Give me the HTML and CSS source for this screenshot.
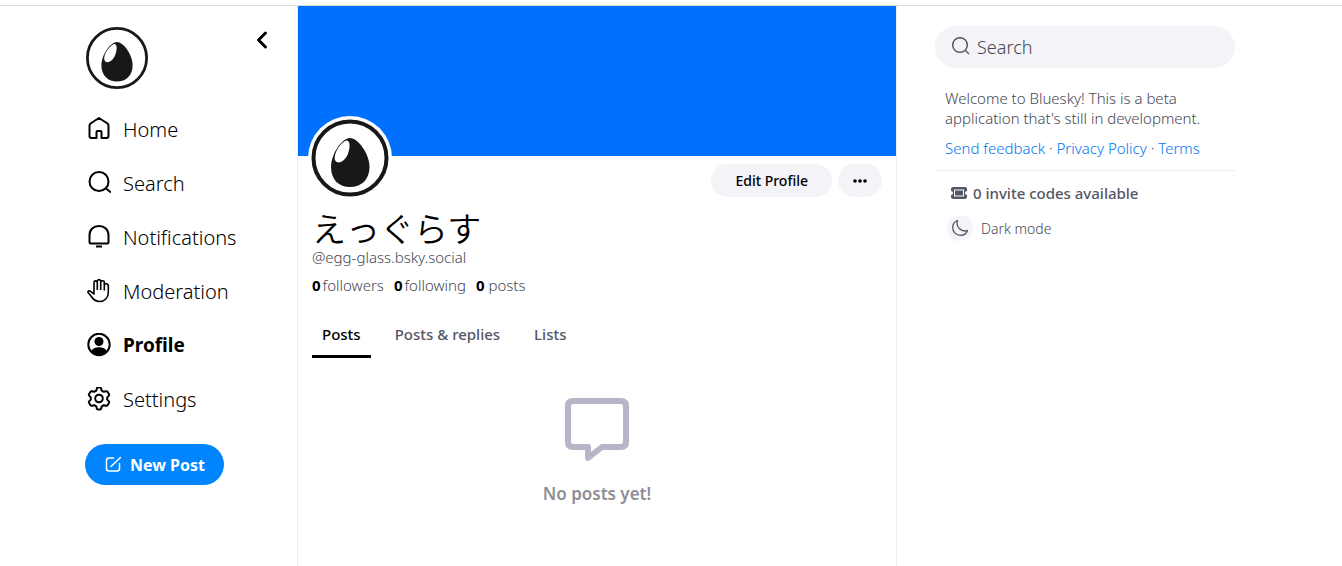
FILE: index.html
```html
<!DOCTYPE html>
<html lang="en">
<head>
    <meta charset="UTF-8">
    <meta name="viewport" content="width=device-width, initial-scale=1.0">
    <title>えっぐらす (@egg-glass.bsky.social)</title>
    <link rel="stylesheet" href="styles.css">
</head>
<body>
    <div class="shell">
        <nav class="left-nav">
            <div class="nav-top">
                <a href="#" class="avatar-link" aria-label="My profile">
                    <svg class="avatar" viewBox="0 0 80 80">
                        <circle cx="40" cy="40" r="37" fill="#fff" stroke="#17181a" stroke-width="3.500"/>
                        <path d="M40 20C48 20 59.500 36 59.500 49C59.500 62 51 69.500 40 69.500C29 69.500 20.500 62 20.500 49C20.500 36 32 20 40 20Z" fill="#17181a"/>
                        <path d="M35 23C39 20.500 41 26 38.500 34C36.500 42 29 48 25 44C21.500 39 28 27 35 23Z" fill="#fff"/>
                    </svg>
                </a>
                <button class="back-button" aria-label="Back">
                    <svg width="14" height="20" viewBox="0 0 14 20" fill="none" stroke="#000" stroke-width="3" stroke-linecap="round" stroke-linejoin="round"><path d="M10.500 3L3.500 10L10.500 17"/></svg>
                </button>
            </div>

            <a href="#" class="nav-item">
                <svg viewBox="0 0 24 24"><path d="M12 1L3.500 6.500Q2.500 7.300 2.500 9V19Q2.500 21 4.500 21H9.500V15Q9.500 14 10.500 14H13.500Q14.500 14 14.500 15V21H19.500Q21.500 21 21.500 19V9Q21.500 7.300 20.500 6.500Z"/></svg>
                Home
            </a>
            <a href="#" class="nav-item">
                <svg viewBox="0 0 24 24"><circle cx="12" cy="10.500" r="9.500"/><path d="M19 17.500L24 21.500"/></svg>
                Search
            </a>
            <a href="#" class="nav-item">
                <svg viewBox="0 0 24 24"><path d="M4 18.500Q2.500 18.500 2.500 17V10.500C2.500 4.500 6.500 1 12 1C17.500 1 21.500 4.500 21.500 10.500V17Q21.500 18.500 20 18.500Z"/><path d="M9 21.500H15" stroke-linecap="butt"/></svg>
                Notifications
            </a>
            <a href="#" class="nav-item">
                <svg viewBox="0 0 24 24" class="thin"><path d="M7 11V3.500C7 1.300 10.300 1.300 10.300 3.500V11M10.300 11V2.300C10.300 .200 13.700 .200 13.700 2.300V11M13.700 11V3.200C13.700 1.200 17.300 1.200 17.300 3.200V11.500M17.300 6C17.300 4 21.300 4.300 21.300 7V13.500C21.300 19 17.500 22.500 12.800 22.500C8.500 22.500 5.800 20 4 17L1 13.500C.500 12 2.300 11.500 3.500 12.300L7 15V11"/></svg>
                Moderation
            </a>
            <a href="#" class="nav-item active">
                <svg viewBox="0 0 24 24"><circle cx="12" cy="11.500" r="10.700"/><circle cx="12" cy="8.500" r="4.500" fill="#000" stroke="none"/><path d="M4 18.500C6 15 9 14.300 12 14.300C15 14.300 18 15 20 18.500C18 21.500 15 22.500 12 22.500C9 22.500 6 21.500 4 18.500Z" fill="#000" stroke="none"/></svg>
                Profile
            </a>
            <a href="#" class="nav-item">
                <svg viewBox="0 0 24 24"><circle cx="12" cy="11.500" r="3.800"/><path d="M9.800 1.500Q10 .500 11 .500H13Q14 .500 14.200 1.500L14.700 3.700L16.800 4.800L19 4.200Q20 4 20.500 4.800L21.900 7.100Q22.500 8.100 21.700 8.900L20.200 10.400V12.600L21.700 14.100Q22.500 14.900 21.900 15.900L20.500 18.200Q20 19 19 18.800L16.800 18.200L14.700 19.300L14.200 21.500Q14 22.500 13 22.500H11Q10 22.500 9.800 21.500L9.300 19.300L7.200 18.200L5 18.800Q4 19 3.500 18.200L2.100 15.900Q1.500 14.900 2.300 14.100L3.800 12.600V10.400L2.300 8.900Q1.500 8.100 2.100 7.100L3.500 4.800Q4 4 5 4.200L7.200 4.800L9.300 3.700Z"/></svg>
                Settings
            </a>

            <button class="new-post">
                <svg width="18" height="18" viewBox="0 0 18 18" fill="none" stroke="#fff" stroke-width="1.500" stroke-linecap="round" stroke-linejoin="round"><path d="M9.500 2H5Q2.500 2 2.500 4.500V12.500Q2.500 15 5 15H13Q15.500 15 15.500 12.500V7.500"/><path d="M16.500 1.500L8 9.500L7 10.500"/></svg>
                New Post
            </button>
        </nav>

        <main class="profile">
            <div class="banner"></div>
            <div class="profile-header">
                <div class="profile-avatar">
                    <svg class="avatar" viewBox="0 0 80 80">
                        <circle cx="40" cy="40" r="36.500" fill="#fff" stroke="#17181a" stroke-width="4"/>
                        <path d="M40 20C48 20 59.500 36 59.500 49C59.500 62 51 69 40 69C29 69 21 62 21 49C21 36 32 20 40 20Z" fill="#17181a"/>
                        <path d="M35 23C39 20.500 41 26 38.500 34C36.500 42 29 47 25.500 43C22.500 39 28 27 35 23Z" fill="#fff"/>
                    </svg>
                </div>
                <div class="actions">
                    <button class="pill edit">Edit Profile</button>
                    <button class="pill more" aria-label="More options">
                        <svg width="14" height="4" viewBox="0 0 14 4"><circle cx="2" cy="2" r="1.800"/><circle cx="7" cy="2" r="1.800"/><circle cx="12" cy="2" r="1.800"/></svg>
                    </button>
                </div>
                <h1 lang="ja">えっぐらす</h1>
                <p class="handle">@egg-glass.bsky.social</p>
                <div class="metrics">
                    <a href="#"><b>0</b>followers</a>
                    <a href="#"><b>0</b>following</a>
                    <span><b>0</b> posts</span>
                </div>
            </div>

            <div class="tabs" role="tablist">
                <button role="tab" aria-selected="true" class="tab selected">Posts</button>
                <button role="tab" aria-selected="false" class="tab">Posts &amp; replies</button>
                <button role="tab" aria-selected="false" class="tab">Lists</button>
            </div>

            <div class="empty">
                <svg width="64" height="64" viewBox="0 0 64 64" fill="none" stroke="#b8b5c9" stroke-width="6" stroke-linejoin="round"><path d="M8 3H56Q61 3 61 8V44Q61 49 56 49H37L23 60V49H8Q3 49 3 44V8Q3 3 8 3Z"/></svg>
                <p>No posts yet!</p>
            </div>
        </main>

        <aside class="right-nav">
            <label class="search">
                <svg width="20" height="20" viewBox="0 0 20 20" fill="none" stroke="#545664" stroke-width="1.500"><circle cx="9" cy="8" r="7.300"/><path d="M14 13L18 17"/></svg>
                <input type="search" placeholder="Search" aria-label="Search">
            </label>
            <div class="about">
                <p>Welcome to Bluesky! This is a beta application that's still in development.</p>
                <p class="links"><a href="#">Send feedback</a> · <a href="#">Privacy Policy</a> · <a href="#">Terms</a></p>
            </div>
            <a href="#" class="invites">
                <svg width="16" height="12" viewBox="0 0 16 12" fill="#545664"><path fill-rule="evenodd" d="M2 0H14Q16 0 16 2V4A2 2 0 0 0 16 8V10Q16 12 14 12H2Q0 12 0 10V8A2 2 0 0 0 0 4V2Q0 0 2 0ZM3 2.500V9.500H13V2.500Z"/><path d="M4 3.500H12V8.500H4Z"/></svg>
                0 invite codes available
            </a>
            <button class="dark-mode">
                <span class="moon">
                    <svg width="18" height="18" viewBox="0 0 18 18" fill="none" stroke="#545664" stroke-width="1.300" stroke-linejoin="round"><path d="M6.500 1.500C3.500 2.500 1.700 5.500 1.700 8.500C1.700 13 5 16.300 9.500 16.300C12.500 16.300 15.500 14.500 16.500 11.500C10.500 13.500 4.500 8 6.500 1.500Z"/></svg>
                </span>
                Dark mode
            </button>
        </aside>
    </div>
</body>
</html>
```
FILE: styles.css
```css
* {
    box-sizing: border-box;
}

body {
    margin: 5px 0 0;
    border-top: 1px solid #dadce0;
    background: #fff;
    color: #000;
    font-family: "Noto Sans", "Noto Sans CJK JP", sans-serif;
    font-size: 15px;
    font-weight: 300;
}

h1,
p {
    margin: 0;
}

a {
    color: inherit;
    text-decoration: none;
}

button {
    border: none;
    padding: 0;
    background: none;
    color: inherit;
    font: inherit;
    cursor: pointer;
}

svg {
    display: block;
    flex: none;
}

.shell {
    display: flex;
    justify-content: center;
    min-height: calc(100vh - 6px);
    padding-right: 22px;
}

/* Left navigation */
.left-nav {
    flex: 0 0 212px;
    padding-top: 20px;
}

.nav-top {
    display: flex;
    justify-content: space-between;
    align-items: flex-start;
    padding: 0 28px 12px 0;
}

.avatar {
    width: 100%;
    height: auto;
}

.avatar-link {
    width: 64px;
}

.back-button {
    padding-top: 4px;
}

.nav-item {
    display: flex;
    align-items: center;
    gap: 12px;
    height: 54px;
    padding-left: 2px;
    font-size: 20px;
}

.nav-item svg {
    width: 24px;
    height: 24px;
    fill: none;
    stroke: #000;
    stroke-width: 2;
    stroke-linejoin: round;
}

.nav-item .thin {
    stroke-width: 1.6;
}

.nav-item.active {
    font-size: 19px;
    font-weight: 700;
}

.new-post {
    display: flex;
    align-items: center;
    gap: 8px;
    height: 41px;
    margin-top: 18px;
    padding: 0 19px;
    border-radius: 24px;
    background: #0085ff;
    color: #fff;
    font-size: 16px;
    font-weight: 700;
}

/* Profile column */
.profile {
    flex: 0 1 600px;
    min-width: 0;
    border: solid #eeecee;
    border-width: 0 1px;
}

.banner {
    height: 150px;
    background: #0070ff;
}

.profile-header {
    position: relative;
    padding: 8px 14px 0;
}

.profile-avatar {
    position: absolute;
    top: -40px;
    left: 10px;
    width: 84px;
    padding: 2px;
    border-radius: 50%;
    background: #fff;
}

.actions {
    display: flex;
    justify-content: flex-end;
    gap: 6px;
}

.pill {
    display: flex;
    justify-content: center;
    align-items: center;
    height: 33px;
    border-radius: 24px;
    background: #f3f3f8;
    font-size: 14px;
    font-weight: 500;
}

.edit {
    padding: 0 24px;
}

.more {
    padding: 0 15px;
}

h1 {
    margin-top: 12px;
    font-family: "Noto Sans CJK JP", sans-serif;
    font-size: 34px;
    font-weight: 350;
    line-height: 38px;
}

.handle {
    color: #454753;
    line-height: 20px;
}

.metrics {
    display: flex;
    gap: 10px;
    margin-top: 8px;
    color: #454753;
    line-height: 20px;
}

.metrics b {
    color: #000;
    font-weight: 700;
}

.metrics a b {
    margin-right: 2px;
}

.tabs {
    display: flex;
    gap: 14px;
    margin-top: 22px;
    padding: 0 14px;
}

.tab {
    padding: 7px 10px 11px;
    border-bottom: 3px solid transparent;
    color: #545664;
    font-weight: 500;
    line-height: 20px;
}

.tab.selected {
    border-color: #000;
    color: #000;
}

.empty {
    display: flex;
    flex-direction: column;
    align-items: center;
    gap: 20px;
    padding-top: 40px;
    color: #8d8e96;
    font-size: 17px;
    font-weight: 600;
    line-height: 24px;
}

/* Right column */
.right-nav {
    flex: 0 0 300px;
    min-width: 0;
    margin-left: 38px;
    padding-top: 20px;
    color: #454753;
}

.search {
    display: flex;
    align-items: center;
    gap: 6px;
    height: 42px;
    padding: 0 16px;
    border-radius: 24px;
    background: #f3f3f8;
}

.search input {
    flex: 1;
    min-width: 0;
    border: none;
    padding: 0;
    outline: none;
    background: none;
    color: inherit;
    font: inherit;
    font-size: 18px;
}

.search input::placeholder {
    color: #454753;
}

.about {
    padding: 20px 10px 12px;
    border-bottom: 1px solid #eeecee;
    line-height: 20px;
}

.links {
    margin-top: 10px;
}

.links a {
    color: #0078f0;
}

.invites {
    display: flex;
    align-items: center;
    gap: 6px;
    padding: 12px 16px 0;
    color: #545664;
    font-weight: 500;
    line-height: 20px;
}

.dark-mode {
    display: flex;
    align-items: center;
    gap: 8px;
    margin-top: 12px;
    padding-left: 12px;
    font-size: 14px;
}

.moon {
    display: grid;
    place-items: center;
    width: 26px;
    height: 26px;
    border-radius: 50%;
    background: #f3f3f8;
}
```
